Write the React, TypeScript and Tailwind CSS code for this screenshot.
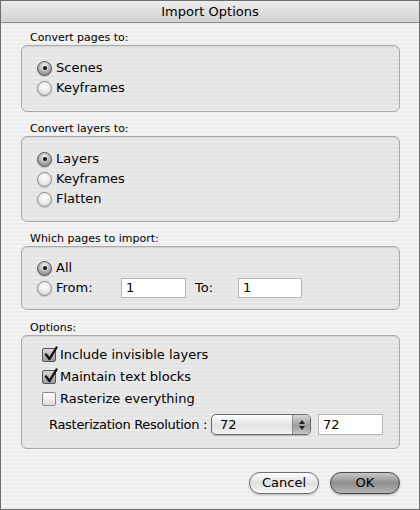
import React from "react";

const font = "font-['Lucida_Grande','DejaVu_Sans',sans-serif]";

function Radio({ on, label }: { on?: boolean; label: string }) {
  return (
    <div className="flex h-[20px] items-center">
      <span
        className={`flex h-[15px] w-[15px] items-center justify-center rounded-full border ${
          on
            ? "border-[#555] bg-[radial-gradient(circle_at_50%_30%,#f4f4f4,#9a9a9a_70%,#6f6f6f)]"
            : "border-[#8a8a8a] bg-[radial-gradient(circle_at_50%_35%,#ffffff,#e6e6e6_60%,#c4c4c4)]"
        } shadow-[0_1px_1px_rgba(0,0,0,0.15)]`}
      >
        {on && <span className="h-[4px] w-[4px] rounded-full bg-[#111]" />}
      </span>
      <span className="ml-[4px] text-[13px] text-black">{label}</span>
    </div>
  );
}

function Check({ on, label }: { on?: boolean; label: string }) {
  return (
    <div className="flex h-[22px] items-center">
      <span
        className={`relative h-[14px] w-[14px] rounded-[2px] border ${
          on
            ? "border-[#555] bg-[linear-gradient(#d8d8d8,#9c9c9c)]"
            : "border-[#8a8a8a] bg-[linear-gradient(#ffffff,#dcdcdc)]"
        }`}
      >
        {on && (
          <svg
            viewBox="0 0 16 16"
            className="absolute left-[0px] top-[-3px] h-[16px] w-[16px]"
          >
            <path
              d="M3 8.5 L6.5 13 L13.5 1.5"
              fill="none"
              stroke="#111"
              strokeWidth="2.4"
              strokeLinecap="round"
              strokeLinejoin="round"
            />
          </svg>
        )}
      </span>
      <span className="ml-[4px] text-[13px] text-black">{label}</span>
    </div>
  );
}

function Group({
  title,
  h,
  className,
  children,
}: {
  title: string;
  h: string;
  className?: string;
  children: React.ReactNode;
}) {
  return (
    <div className={className}>
      <div className="h-[14px] pl-[9px] text-[11px] leading-[14px] text-black">
        {title}
      </div>
      <div
        className={`${h} rounded-[6px] border border-[#a9a9a9] bg-black/[0.04] shadow-[inset_0_1px_1px_rgba(0,0,0,0.08)]`}
      >
        {children}
      </div>
    </div>
  );
}

export default function App() {
  return (
    <div
      className={`${font} flex h-[510px] w-[420px] flex-col overflow-hidden border border-[#6e6e6e] bg-[repeating-linear-gradient(0deg,#ededed_0px,#ededed_2px,#f4f4f4_2px,#f4f4f4_4px)] text-black`}
    >
      <div className="flex h-[22px] shrink-0 items-center justify-center border-b border-[#8c8c8c] bg-[linear-gradient(#ececec,#d2d2d2)] text-[13px]">
        Import Options
      </div>

      <div className="flex flex-col pl-[20px] pr-[19px] pt-[8px]">
        <Group title="Convert pages to:" h="h-[67px]">
          <div className="pl-[15px] pt-[12px]">
            <Radio on label="Scenes" />
            <Radio label="Keyframes" />
          </div>
        </Group>

        <Group title="Convert layers to:" h="h-[86px]" className="mt-[10px]">
          <div className="pl-[15px] pt-[12px]">
            <Radio on label="Layers" />
            <Radio label="Keyframes" />
            <Radio label="Flatten" />
          </div>
        </Group>

        <Group
          title="Which pages to import:"
          h="h-[64px]"
          className="mt-[10px]"
        >
          <div className="pl-[15px] pt-[11px]">
            <Radio on label="All" />
            <div className="flex items-center">
              <div className="w-[84px]">
                <Radio label="From:" />
              </div>
              <div className="flex h-[20px] w-[65px] items-center border border-[#b5b5b5] bg-white pl-[4px] text-[13px]">
                1
              </div>
              <span className="ml-[9px] w-[43px] text-[13px]">To:</span>
              <div className="flex h-[20px] w-[64px] items-center border border-[#b5b5b5] bg-white pl-[4px] text-[13px]">
                1
              </div>
            </div>
          </div>
        </Group>

        <Group title="Options:" h="h-[114px]" className="mt-[11px]">
          <div className="pl-[20px] pt-[8px]">
            <Check on label="Include invisible layers" />
            <Check on label="Maintain text blocks" />
            <Check label="Rasterize everything" />
          </div>
          <div className="mt-[4px] flex items-center pl-[27px]">
            <span className="w-[162px] shrink-0 whitespace-nowrap text-[13px] tracking-[-0.3px]">
              Rasterization Resolution :
            </span>
            <div className="flex h-[21px] w-[100px] items-center overflow-hidden rounded-[5px] border border-[#6a6a6a] bg-[linear-gradient(#ffffff,#e2e2e2_55%,#f4f4f4)] shadow-[0_1px_1px_rgba(0,0,0,0.2)]">
              <span className="flex-1 pl-[8px] text-[13px]">72</span>
              <span className="flex h-full w-[18px] flex-col items-center justify-center gap-[2px] border-l border-[#8a8a8a] bg-[linear-gradient(#d6d6d6,#9e9e9e_55%,#c4c4c4)]">
                <svg viewBox="0 0 6 4" className="h-[4px] w-[6px]">
                  <path d="M0 4 L3 0 L6 4 Z" fill="#222" />
                </svg>
                <svg viewBox="0 0 6 4" className="h-[4px] w-[6px]">
                  <path d="M0 0 L3 4 L6 0 Z" fill="#222" />
                </svg>
              </span>
            </div>
            <div className="ml-[7px] flex h-[21px] w-[65px] items-center border border-[#b5b5b5] bg-white pl-[4px] text-[13px]">
              72
            </div>
          </div>
        </Group>

        <div className="mt-[23px] flex justify-end gap-[11px]">
          <button className="h-[22px] w-[70px] rounded-full border border-[#6f6f6f] bg-[linear-gradient(#ffffff,#e0e0e0_50%,#f6f6f6)] text-[13px] shadow-[0_1px_2px_rgba(0,0,0,0.25)]">
            Cancel
          </button>
          <button className="h-[22px] w-[70px] rounded-full border border-[#4a4a4a] bg-[linear-gradient(#c9c9c9,#8e8e8e_50%,#b4b4b4)] text-[13px] shadow-[0_1px_2px_rgba(0,0,0,0.3)]">
            OK
          </button>
        </div>
      </div>
    </div>
  );
}
